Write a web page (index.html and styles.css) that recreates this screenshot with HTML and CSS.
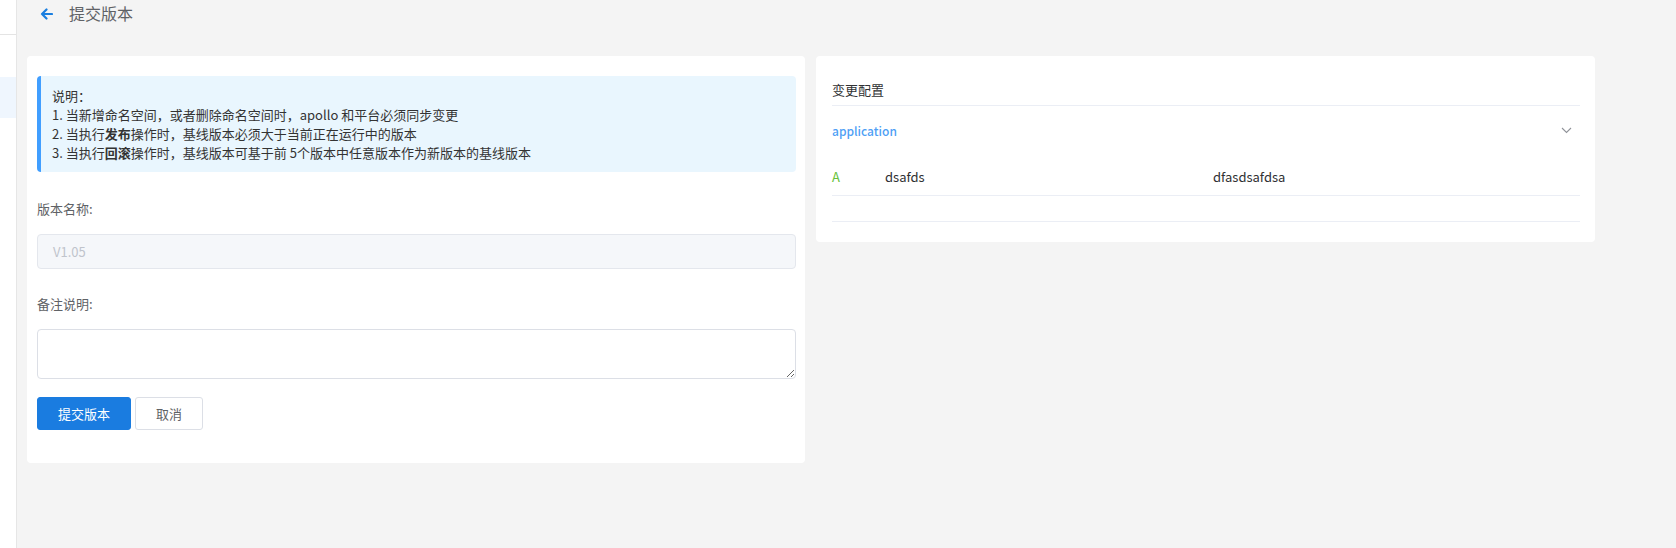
FILE: index.html
```html
<!DOCTYPE html>
<html lang="zh-CN">
<head>
<meta charset="utf-8">
<title>提交版本</title>
<link rel="stylesheet" href="styles.css">
</head>
<body>
<div class="layout">
  <aside class="sidebar">
    <div class="side-top"></div>
    <div class="side-gap"></div>
    <div class="side-active"></div>
  </aside>
  <main class="main">
    <header class="page-header">
      <svg class="back" width="13" height="12" viewBox="0 0 13 12"><path d="M12 6H2M6.5 1.5L2 6l4.5 4.5" fill="none" stroke="#1a7fe0" stroke-width="2.2" stroke-linecap="round" stroke-linejoin="round"/></svg>
      <span class="page-title">提交版本</span>
    </header>
    <div class="cards">
      <section class="card card-left">
        <div class="alert">
          <div>说明：</div>
          <div>1. 当新增命名空间，或者删除命名空间时，apollo 和平台必须同步变更</div>
          <div>2. 当执行<b>发布</b>操作时，基线版本必须大于当前正在运行中的版本</div>
          <div>3. 当执行<b>回滚</b>操作时，基线版本可基于前 5个版本中任意版本作为新版本的基线版本</div>
        </div>
        <div class="label label-first">版本名称:</div>
        <div class="input disabled">V1.05</div>
        <div class="label label-second">备注说明:</div>
        <textarea class="textarea"></textarea>
        <div class="actions">
          <button class="btn btn-primary">提交版本</button>
          <button class="btn btn-default">取消</button>
        </div>
      </section>
      <section class="card card-right">
        <div class="card-title">变更配置</div>
        <div class="collapse-item">
          <div class="collapse-head">
            <span class="ns">application</span>
            <svg class="chev" width="11" height="7" viewBox="0 0 11 7"><path d="M1 1l4.5 4.5L10 1" fill="none" stroke="#909399" stroke-width="1.1"/></svg>
          </div>
          <div class="collapse-body">
            <div class="row">
              <span class="tag-a">A</span>
              <span class="key">dsafds</span>
              <span class="val">dfasdsafdsa</span>
            </div>
          </div>
        </div>
      </section>
    </div>
  </main>
</div>
</body>
</html>
```
FILE: styles.css
```css
* { box-sizing: border-box; }
html, body { margin: 0; padding: 0; }
body {
  width: 1676px;
  height: 548px;
  overflow: hidden;
  background: #f4f4f4;
  font-family: "Noto Sans CJK SC", "Noto Sans", sans-serif;
  font-size: 13px;
  color: #303133;
}
.layout { display: flex; height: 548px; }
.sidebar {
  width: 17px;
  flex: none;
  background: #fff;
  border-right: 1px solid #e6e6e6;
}
.side-top { height: 35px; border-bottom: 1px solid #e4e4e4; }
.side-gap { height: 42px; }
.side-active { height: 41px; background: #eff6fe; }
.main { flex: 1; }
.page-header {
  height: 26px;
  display: flex;
  align-items: center;
  padding-left: 23px;
}
.back { display: block; margin-right: 16px; margin-top: 1px; }
.page-title { font-size: 16px; color: #5f6266; line-height: 26px; }
.cards {
  display: flex;
  align-items: flex-start;
  gap: 11px;
  padding: 30px 0 0 10px;
}
.card { background: #fff; border-radius: 4px; }
.card-left { width: 778px; padding: 20px 9px 33px 10px; }
.card-right { width: 779px; padding: 24px 15px 20px 16px; }
.alert {
  background: #e9f6fe;
  border-left: 4px solid #409eff;
  border-radius: 4px;
  padding: 10px 11px;
  line-height: 19px;
  color: #333;
}
.alert b { font-weight: 700; }
.label { line-height: 20px; color: #606266; }
.label-first { margin-top: 27px; margin-bottom: 15px; }
.label-second { margin-top: 25px; margin-bottom: 15px; }
.input {
  height: 35px;
  border: 1px solid #e4e7ed;
  border-radius: 4px;
  padding: 0 15px;
  line-height: 33px;
}
.input.disabled { background: #f5f7fa; color: #c0c4cc; }
.textarea {
  display: block;
  width: 100%;
  height: 50px;
  border: 1px solid #dcdfe6;
  border-radius: 4px;
  resize: vertical;
  font: inherit;
  margin: 0;
}
.actions { display: flex; gap: 4px; margin-top: 18px; }
.btn {
  height: 33px;
  border-radius: 3px;
  font-family: inherit;
  font-size: 13px;
  padding: 0;
  cursor: pointer;
}
.btn-primary { width: 94px; background: #1a7ce0; border: 1px solid #1a7ce0; color: #fff; }
.btn-default { width: 68px; background: #fff; border: 1px solid #dcdfe6; color: #606266; }
.card-title {
  line-height: 20px;
  font-size: 13px;
  color: #303133;
  padding-bottom: 5px;
  border-bottom: 1px solid #ebeef5;
}
.collapse-item { border-bottom: 1px solid #ebeef5; }
.collapse-head {
  height: 48px;
  display: flex;
  align-items: center;
  justify-content: space-between;
  padding-right: 8px;
}
.ns { color: #4f9ff5; font-weight: 500; font-size: 12px; }
.chev { display: block; }
.collapse-body { padding-bottom: 25px; }
.row {
  height: 42px;
  display: flex;
  align-items: center;
  border-bottom: 1px solid #ebeef5;
  color: #303133;
  padding-top: 4px;
}
.tag-a { width: 53px; color: #67c23a; }
.key { width: 328px; }
.val { }
```
